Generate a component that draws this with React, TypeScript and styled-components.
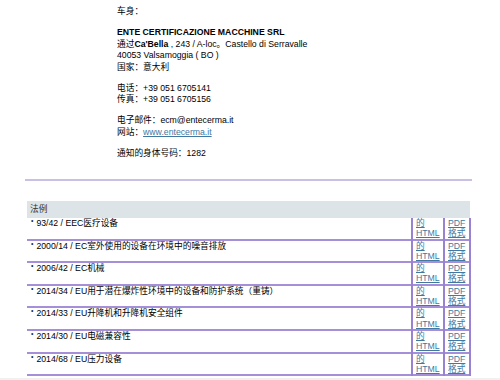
import React from 'react';
import styled, {createGlobalStyle} from 'styled-components';

const GlobalStyle = createGlobalStyle`
  html, body {
    margin: 0;
    padding: 0;
    background: #ffffff;
  }
  body {
    font-family: "Liberation Sans", "Noto Sans CJK SC", sans-serif;
    font-size: 8.7px;
    color: #000000;
  }
`;

const Page = styled.div`
  width: 500px;
  height: 380px;
  overflow: hidden;
  position: relative;
`;

const Body = styled.div`
  padding: 6px 0 0 117px;
  line-height: 11.5px;
`;

const Para = styled.p`
  margin: 0 0 9.5px 0;
`;

const Strong = styled.b`
  font-weight: bold;
`;

const Link = styled.a`
  color: #41789f;
  text-decoration: underline;
`;

const Divider = styled.hr`
  margin: 20px 28px 0 25px;
  border: none;
  height: 2px;
  background: #cbbfe4;
`;

const Table = styled.table`
  margin: 20px 0 0 27px;
  width: 443px;
  table-layout: fixed;
  border-collapse: collapse;
  line-height: 10.3px;
`;

const Col = styled.col<{w: number}>`
  width: ${p => p.w}px;
`;

const HeadCell = styled.th`
  background: #dde4e8;
  text-align: left;
  font-weight: normal;
  padding: 3px 3px;
  height: 11px;
  line-height: 11px;
  color: #333;
`;

const Row = styled.tr`
  border-bottom: 2px solid #a58fd8;
`;

const TitleCell = styled.td`
  vertical-align: top;
  padding: 0 0 0 4px;
  height: 20.6px;
  white-space: nowrap;
`;

const Bullet = styled.span`
  display: inline-block;
  font-size: 7px;
  vertical-align: top;
  line-height: 6px;
  margin-right: 3px;
  color: #1a2a60;
`;

const LinkCell = styled.td`
  vertical-align: top;
  padding: 0 0 0 3px;
  border-left: 2px solid #9a82d2;
  border-right: 2px solid #9a82d2;
`;

const Foot = styled.div`
  position: absolute;
  left: 0;
  right: 0;
  bottom: 0;
  height: 2px;
  background: #f1f1f1;
`;

const laws = [
  '93/42 / EEC医疗设备',
  '2000/14 / EC室外使用的设备在环境中的噪音排放',
  '2006/42 / EC机械',
  '2014/34 / EU用于潜在爆炸性环境中的设备和防护系统（重铸）',
  '2014/33 / EU升降机和升降机安全组件',
  '2014/30 / EU电磁兼容性',
  '2014/68 / EU压力设备',
];

export default function App() {
  return (
    <Page>
      <GlobalStyle />
      <Body>
        <Para>车身：</Para>
        <Para>
          <Strong>ENTE CERTIFICAZIONE MACCHINE SRL</Strong>
          <br />
          通过<Strong>Ca'Bella</Strong> , 243 / A-loc。Castello di Serravalle
          <br />
          40053 Valsamoggia ( BO )
          <br />
          国家：意大利
        </Para>
        <Para>
          电话：+39 051 6705141
          <br />
          传真：+39 051 6705156
        </Para>
        <Para>
          电子邮件：ecm@entecerma.it
          <br />
          网站：<Link href="#">www.entecerma.it</Link>
        </Para>
        <Para>通知的身体号码：1282</Para>
      </Body>
      <Divider />
      <Table>
        <colgroup>
          <Col w={385} />
          <Col w={32} />
          <Col w={26} />
        </colgroup>
        <thead>
          <tr>
            <HeadCell colSpan={3}>法例</HeadCell>
          </tr>
        </thead>
        <tbody>
          {laws.map(law => (
            <Row key={law}>
              <TitleCell>
                <Bullet>•</Bullet>
                {law}
              </TitleCell>
              <LinkCell>
                <Link href="#">的</Link>
                <br />
                <Link href="#">HTML</Link>
              </LinkCell>
              <LinkCell>
                <Link href="#">PDF</Link>
                <br />
                <Link href="#">格式</Link>
              </LinkCell>
            </Row>
          ))}
        </tbody>
      </Table>
      <Foot />
    </Page>
  );
}
